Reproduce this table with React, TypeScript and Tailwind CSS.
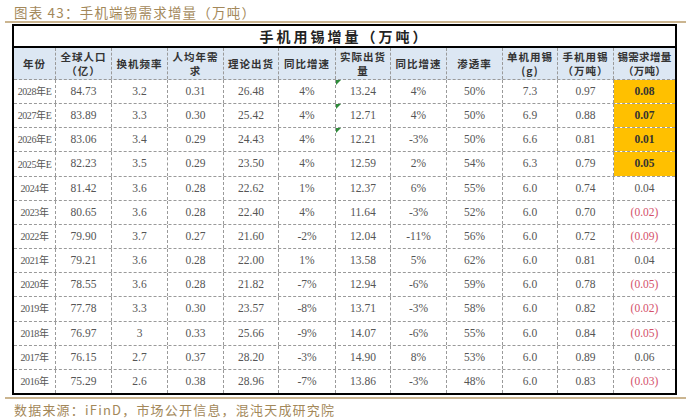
const cols = [
  'w-[42px]', 'w-[56px]', 'w-[56px]', 'w-[56px]', 'w-[55px]', 'w-[57px]',
  'w-[55px]', 'w-[56px]', 'w-[56px]', 'w-[55px]', 'w-[56px]', 'w-[61px]',
];

const headers: string[][] = [
  ['年份'],
  ['全球人口', '（亿）'],
  ['换机频率'],
  ['人均年需', '求'],
  ['理论出货'],
  ['同比增速'],
  ['实际出货', '量'],
  ['同比增速'],
  ['渗透率'],
  ['单机用锡', '(g)'],
  ['手机用锡', '（万吨）'],
  ['锡需求增量', '（万吨）'],
];

type Row = { cells: string[]; hi?: boolean; neg?: boolean; mark?: boolean };

const rows: Row[] = [
  { cells: ['2028年E', '84.73', '3.2', '0.31', '26.48', '4%', '13.24', '4%', '50%', '7.3', '0.97', '0.08'], hi: true, mark: true },
  { cells: ['2027年E', '83.89', '3.3', '0.30', '25.42', '4%', '12.71', '4%', '50%', '6.9', '0.88', '0.07'], hi: true, mark: true },
  { cells: ['2026年E', '83.06', '3.4', '0.29', '24.43', '4%', '12.21', '-3%', '50%', '6.6', '0.81', '0.01'], hi: true, mark: true },
  { cells: ['2025年E', '82.23', '3.5', '0.29', '23.50', '4%', '12.59', '2%', '54%', '6.3', '0.79', '0.05'], hi: true },
  { cells: ['2024年', '81.42', '3.6', '0.28', '22.62', '1%', '12.37', '6%', '55%', '6.0', '0.74', '0.04'] },
  { cells: ['2023年', '80.65', '3.6', '0.28', '22.40', '4%', '11.64', '-3%', '52%', '6.0', '0.70', '(0.02)'], neg: true },
  { cells: ['2022年', '79.90', '3.7', '0.27', '21.60', '-2%', '12.04', '-11%', '56%', '6.0', '0.72', '(0.09)'], neg: true },
  { cells: ['2021年', '79.21', '3.6', '0.28', '22.00', '1%', '13.58', '5%', '62%', '6.0', '0.81', '0.04'] },
  { cells: ['2020年', '78.55', '3.6', '0.28', '21.82', '-7%', '12.94', '-6%', '59%', '6.0', '0.78', '(0.05)'], neg: true },
  { cells: ['2019年', '77.78', '3.3', '0.30', '23.57', '-8%', '13.71', '-3%', '58%', '6.0', '0.82', '(0.02)'], neg: true },
  { cells: ['2018年', '76.97', '3', '0.33', '25.66', '-9%', '14.07', '-6%', '55%', '6.0', '0.84', '(0.05)'], neg: true },
  { cells: ['2017年', '76.15', '2.7', '0.37', '28.20', '-3%', '14.90', '8%', '53%', '6.0', '0.89', '0.06'] },
  { cells: ['2016年', '75.29', '2.6', '0.38', '28.96', '-7%', '13.86', '-3%', '48%', '6.0', '0.83', '(0.03)'], neg: true },
];

export default function App() {
  return (
    <div className="w-[697px] h-[419px] bg-white overflow-hidden font-['Liberation_Serif','Noto_Sans_CJK_SC',serif]">
      {/* Caption */}
      <div className="pl-[14px] pt-[3px] h-[21px] text-[13.5px] leading-[18px] text-[#a3885a] font-['Noto_Sans_CJK_SC',sans-serif] tracking-[1.2px]">
        图表 43：手机端锡需求增量（万吨）
      </div>
      <div className="ml-[5px] w-[681px] h-[2px] bg-[#cbb590]" />

      {/* Table */}
      <div className="ml-[12px] mt-[1px] w-[665px] h-[371px] border-2 border-black flex flex-col">
        <div className="h-[22px] flex items-center justify-center border-b-2 border-black font-['Noto_Sans_CJK_SC',sans-serif] font-bold text-[14px] text-[#222] tracking-[3px]">
          手机用锡增量（万吨）
        </div>

        <div className="flex h-[32px] bg-[#dce7f3] border-b border-dashed border-[#9a9a9a]">
          {headers.map((h, i) => (
            <div
              key={i}
              className={`${cols[i]} shrink-0 flex flex-col items-center justify-center ${i < 11 ? 'border-r border-dashed border-[#9a9a9a]' : ''} font-['Noto_Sans_CJK_SC',sans-serif] font-bold text-[10.5px] leading-[14px] text-[#333] ${i === 11 ? 'tracking-[0.3px]' : 'tracking-[1px]'}`}
            >
              {h.map((line, j) => (
                <span key={j}>{line}</span>
              ))}
            </div>
          ))}
        </div>

        <div className="flex-1 flex flex-col">
          {rows.map((r, ri) => (
            <div key={ri} className={`flex flex-1 ${ri < rows.length - 1 ? 'border-b border-dashed border-[#9a9a9a]' : ''}`}>
              {r.cells.map((c, ci) => {
                const last = ci === 11;
                let tone = 'text-[#555]';
                if (last && r.hi) tone = 'bg-[#ffc000] text-[#333] font-bold';
                else if (last && r.neg) tone = 'text-[#d4506a]';
                return (
                  <div
                    key={ci}
                    className={`${cols[ci]} shrink-0 relative flex items-center justify-center ${tone} ${!last ? 'border-r border-dashed border-[#9a9a9a]' : ''} ${ci === 0 ? 'text-[10px] tracking-[-0.4px] whitespace-nowrap' : 'text-[11.5px]'}`}
                  >
                    {ci === 6 && r.mark && (
                      <span className="absolute left-0 top-0 w-0 h-0 border-t-[5px] border-r-[5px] border-t-[#2e8b3a] border-r-transparent" />
                    )}
                    {c}
                  </div>
                );
              })}
            </div>
          ))}
        </div>
      </div>

      <div className="ml-[5px] mt-[2px] w-[681px] h-[2px] bg-[#cbb590]" />
      {/* Source */}
      <div className="pl-[14px] pt-[3px] text-[13px] leading-[16px] text-[#a3885a] font-['Noto_Sans_CJK_SC',sans-serif] tracking-[1.2px]">
        数据来源：iFinD，市场公开信息，混沌天成研究院
      </div>
    </div>
  );
}
